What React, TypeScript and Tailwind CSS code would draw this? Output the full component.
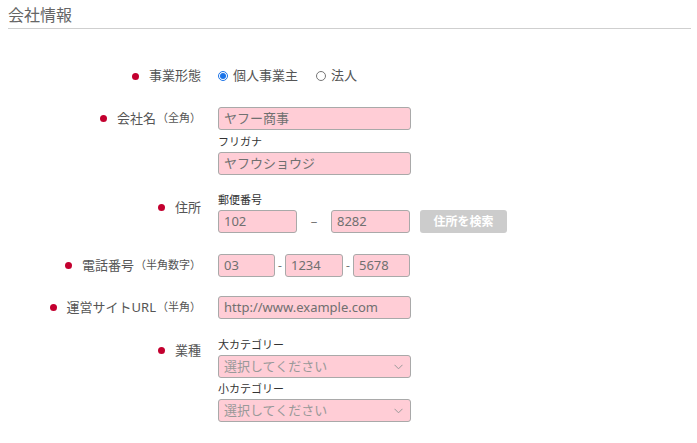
import React from "react";

const font = { fontFamily: '"Noto Sans", "Noto Sans CJK JP", sans-serif' };

function Dot() {
  return <span className="inline-block w-[7px] h-[7px] rounded-full bg-[#c3002f] mr-[10px] shrink-0" />;
}

function Label({ children, small, pt = 0 }: { children: React.ReactNode; small?: string; pt?: number }) {
  return (
    <div className="w-[201px] shrink-0 flex justify-end" style={{ paddingTop: pt }}>
      <div className="flex items-center h-[23px] text-[13px] text-[#555]">
        <Dot />
        <span>{children}</span>
        {small && <span className="text-[11px] ml-[1px]">{small}</span>}
      </div>
    </div>
  );
}

function Input({ value, w, className = "" }: { value: string; w: string; className?: string }) {
  return (
    <div
      className={`h-[23px] ${w} bg-[#ffcdd6] border border-[#a9a9a9] rounded-[3px] pl-[5px] flex items-center text-[13px] text-[#707070] leading-none ${className}`}
    >
      {value}
    </div>
  );
}

function Select() {
  return (
    <div className="h-[23px] w-[193px] bg-[#ffcdd6] border border-[#a9a9a9] rounded-[3px] pl-[5px] pr-[7px] flex items-center justify-between text-[13px] text-[#999]">
      <span>選択してください</span>
      <svg width="9" height="6" viewBox="0 0 9 6" fill="none">
        <path d="M0.5 0.8 L4.5 4.8 L8.5 0.8" stroke="#999" strokeWidth="1" />
      </svg>
    </div>
  );
}

function SubLabel({ children, mt }: { children: React.ReactNode; mt: number }) {
  return (
    <div className="h-[16px] text-[11px] leading-[16px] text-[#333]" style={{ marginTop: mt, marginBottom: 2 }}>
      {children}
    </div>
  );
}

export default function App() {
  return (
    <div className="w-[697px] h-[443px] bg-white overflow-hidden" style={font}>
      <div className="mx-[8px] w-[683px] pt-[4px] pb-[2px] border-b border-[#cfcfcf]">
        <div className="text-[16px] leading-[22px] text-[#666]">会社情報</div>
      </div>

      {/* Row 1 */}
      <div className="flex mt-[37px] h-[20px] items-center">
        <div className="w-[201px] shrink-0 flex justify-end">
          <div className="flex items-center text-[13px] text-[#555]">
            <Dot />
            <span>事業形態</span>
          </div>
        </div>
        <div className="ml-[17px] flex items-center text-[13px] text-[#555]">
          <span className="w-[10px] h-[10px] rounded-full border border-[#1a73e8] flex items-center justify-center">
            <span className="w-[6px] h-[6px] rounded-full bg-[#1a73e8]" />
          </span>
          <span className="ml-[5px]">個人事業主</span>
          <span className="ml-[18px] w-[10px] h-[10px] rounded-full border border-[#767676]" />
          <span className="ml-[5px]">法人</span>
        </div>
      </div>

      {/* Row 2 */}
      <div className="flex mt-[21px]">
        <Label small="（全角）">会社名</Label>
        <div className="ml-[17px] flex flex-col">
          <Input value="ヤフー商事" w="w-[193px]" />
          <div className="h-[16px] text-[11px] leading-[16px] text-[#333] mt-[4px] mb-[2px]">フリガナ</div>
          <Input value="ヤフウショウジ" w="w-[193px]" />
        </div>
      </div>

      {/* Row 3 */}
      <div className="flex mt-[17px]">
        <Label pt={4}>住所</Label>
        <div className="ml-[17px] flex flex-col">
          <div className="h-[16px] text-[11px] leading-[16px] text-[#333] mb-[2px]">郵便番号</div>
          <div className="flex items-center">
            <Input value="102" w="w-[79px]" />
            <span className="w-[34px] text-center text-[13px] text-[#777]">–</span>
            <Input value="8282" w="w-[79px]" />
            <div className="ml-[10px] w-[87px] h-[23px] bg-[#cccccc] rounded-[3px] flex items-center justify-center text-white text-[12px] font-bold">
              住所を検索
            </div>
          </div>
        </div>
      </div>

      {/* Row 4 */}
      <div className="flex mt-[21px]">
        <Label small="（半角数字）">電話番号</Label>
        <div className="ml-[17px] flex items-center">
          <Input value="03" w="w-[57px]" />
          <span className="w-[10px] text-center text-[12px] text-[#777]">-</span>
          <Input value="1234" w="w-[58px]" />
          <span className="w-[10px] text-center text-[12px] text-[#777]">-</span>
          <Input value="5678" w="w-[57px]" />
        </div>
      </div>

      {/* Row 5 */}
      <div className="flex mt-[19px]">
        <Label small="（半角）">運営サイトURL</Label>
        <div className="ml-[17px]">
          <Input value="http://www.example.com" w="w-[193px]" />
        </div>
      </div>

      {/* Row 6 */}
      <div className="flex mt-[18px]">
        <Label pt={2}>業種</Label>
        <div className="ml-[17px] flex flex-col">
          <SubLabel mt={0}>大カテゴリー</SubLabel>
          <Select />
          <SubLabel mt={3}>小カテゴリー</SubLabel>
          <Select />
        </div>
      </div>
    </div>
  );
}
